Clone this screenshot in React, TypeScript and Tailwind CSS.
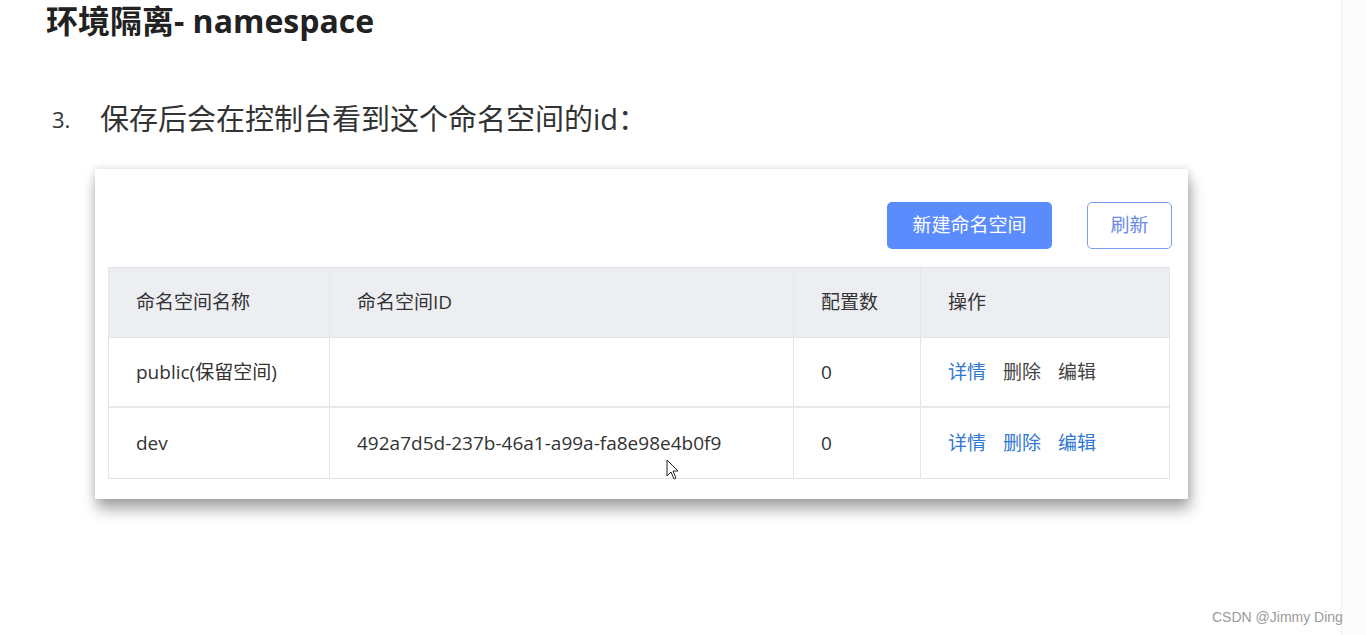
import React from 'react';

const font = { fontFamily: '"Open Sans", "Noto Sans CJK SC", sans-serif' };

type Row = { name: string; id: string; count: number; active: boolean };

const rows: Row[] = [
  { name: 'public(保留空间)', id: '', count: 0, active: false },
  { name: 'dev', id: '492a7d5d-237b-46a1-a99a-fa8e98e4b0f9', count: 0, active: true },
];

function Cursor() {
  return (
    <svg width="14" height="21" viewBox="0 0 14 21" className="absolute left-[666px] top-[459px]">
      <path d="M1 1 L1 17 L5 13 L8 20 L10 19 L7 12 L12 12 Z" fill="white" stroke="#222" strokeWidth="1" strokeLinejoin="round" />
    </svg>
  );
}

function NamespaceTable() {
  const cell = 'border-r border-[#e2e5ea] pl-[27px] flex items-center';
  return (
    <div className="ml-[13px] w-[1062px] border border-[#e2e5ea] text-[19px] text-[#333]">
      <div className="grid grid-cols-[221px_464px_127px_1fr] h-[70px] bg-[#edeef2] border-b border-[#e2e5ea]">
        <div className={cell}>命名空间名称</div>
        <div className={cell}>命名空间ID</div>
        <div className={cell}>配置数</div>
        <div className="pl-[27px] flex items-center">操作</div>
      </div>
      {rows.map((r, i) => (
        <div
          key={r.name}
          className={`grid grid-cols-[221px_464px_127px_1fr] h-[70px] ${i === 0 ? 'border-b-2 border-[#e6e8ec]' : ''}`}
        >
          <div className={cell}>{r.name}</div>
          <div className={cell}>{r.id}</div>
          <div className={cell}>{r.count}</div>
          <div className="pl-[27px] flex items-center gap-[17px]">
            <span className="text-[#2f77d1]">详情</span>
            <span className={r.active ? 'text-[#2f77d1]' : 'text-[#444]'}>删除</span>
            <span className={r.active ? 'text-[#2f77d1]' : 'text-[#444]'}>编辑</span>
          </div>
        </div>
      ))}
    </div>
  );
}

export default function App() {
  return (
    <div className="relative w-[1366px] h-[635px] bg-white overflow-hidden" style={font}>
      <div className="flex h-full">
        <div className="w-[1341px] h-full">
          <h1 className="pl-[46px] pt-[0px] text-[32px] font-bold text-[#222] leading-[42px]">环境隔离- namespace</h1>
          <div className="flex items-center mt-[57px] h-[40px] text-[29px] text-[#333]">
            <span className="w-[48px] pl-[52px] box-content text-[22px]">3.</span>
            <span>保存后会在控制台看到这个命名空间的id：</span>
          </div>
          <div className="ml-[95px] mt-[30px] w-[1093px] h-[330px] bg-white shadow-[2px_10px_14px_rgba(0,0,0,0.35),0_0_8px_rgba(0,0,0,0.12)]">
            <div className="flex justify-end gap-[35px] pr-[16px] pt-[33px] pb-[18px]">
              <button className="w-[165px] h-[47px] rounded-[5px] bg-[#5a8cfd] text-white text-[19px]">新建命名空间</button>
              <button className="w-[85px] h-[47px] rounded-[5px] border border-[#7c9cf2] bg-white text-[#6b8ae6] text-[19px]">刷新</button>
            </div>
            <NamespaceTable />
          </div>
        </div>
        <div className="flex-1 h-full border-l border-[#efefef] bg-[#fcfcfc]" />
      </div>
      <Cursor />
      <div className="absolute left-[1212px] top-[607px] text-[14px] text-[#9a9a9a]" style={{ fontFamily: '"Liberation Sans", sans-serif' }}>
        CSDN @Jimmy Ding
      </div>
    </div>
  );
}
